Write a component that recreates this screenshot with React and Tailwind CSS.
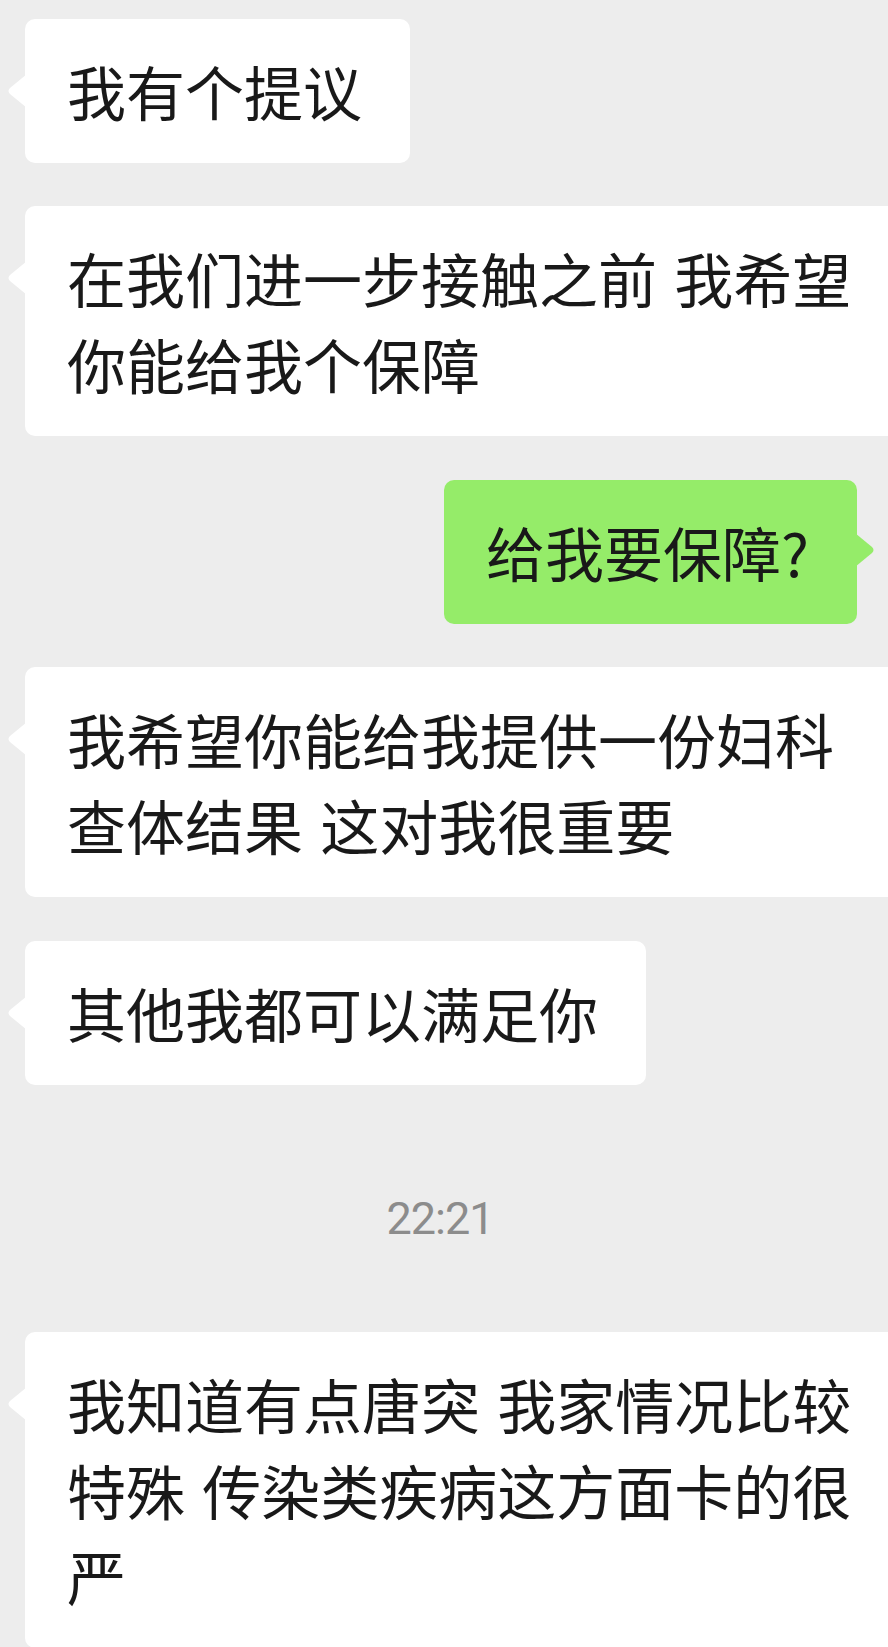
const FONT = '"Noto Sans CJK SC", "Noto Sans", sans-serif'

function Tail({ side, color }) {
  if (side === 'left') {
    return (
      <svg
        className="absolute left-[-18px] top-[55px]"
        width="20"
        height="34"
        viewBox="0 0 20 34"
      >
        <path d="M20 0 L3 14 Q0 17 3 20 L20 34 Z" fill={color} />
      </svg>
    )
  }
  return (
    <svg
      className="absolute right-[-18px] top-[53px]"
      width="20"
      height="34"
      viewBox="0 0 20 34"
    >
      <path d="M0 0 L17 14 Q20 17 17 20 L0 34 Z" fill={color} />
    </svg>
  )
}

function Bubble({ children, mine, className = '' }) {
  return (
    <div
      className={`relative w-max max-w-[904px] rounded-[10px] py-[29px] pl-[42px] pr-[48px] text-[59px] leading-[86px] text-[#191919] [word-spacing:4px] ${
        mine ? 'self-end mr-[31px] bg-[#95ec69]' : 'self-start ml-[25px] bg-white'
      } ${className}`}
    >
      <Tail side={mine ? 'right' : 'left'} color={mine ? '#95ec69' : '#ffffff'} />
      {children}
    </div>
  )
}

export default function App() {
  return (
    <div
      className="w-[888px] min-h-[1647px] overflow-hidden bg-[#ededed] pt-[19px] flex flex-col"
      style={{ fontFamily: FONT }}
    >
      <Bubble>我有个提议</Bubble>
      <Bubble className="mt-[43px]">在我们进一步接触之前 我希望你能给我个保障</Bubble>
      <Bubble mine className="mt-[44px]">给我要保障?</Bubble>
      <Bubble className="mt-[43px]">我希望你能给我提供一份妇科查体结果 这对我很重要</Bubble>
      <Bubble className="mt-[44px]">其他我都可以满足你</Bubble>

      {/* time divider */}
      <div
        className="mt-[104px] h-[60px] text-center text-[45px] leading-[60px] tracking-[-1px] text-[#8c8c8c] pr-[8px]"
        style={{ fontFamily: 'Roboto, "Noto Sans", sans-serif' }}
      >
        22:21
      </div>

      <Bubble className="mt-[83px]">
        我知道有点唐突 我家情况比较特殊 传染类疾病这方面卡的很严
      </Bubble>
    </div>
  )
}
